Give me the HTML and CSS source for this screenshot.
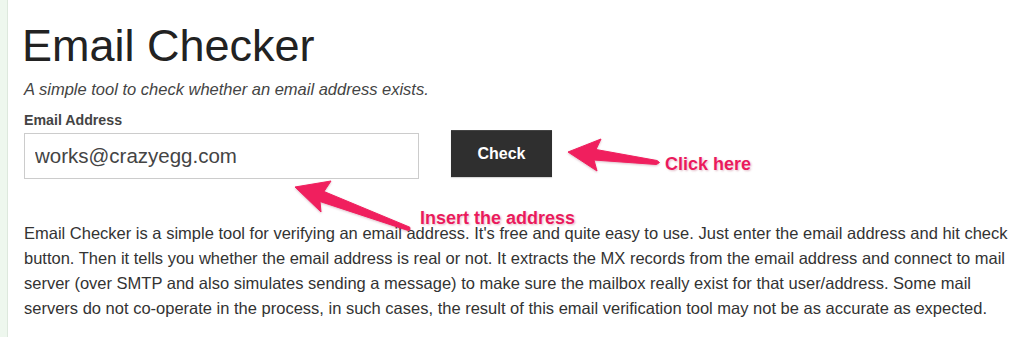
FILE: index.html
```html
<!DOCTYPE html>
<html lang="en">
<head>
<meta charset="utf-8">
<title>Email Checker</title>
<link rel="stylesheet" href="styles.css">
</head>
<body>
<div class="page">
  <div class="content">
    <h1 class="title">Email Checker</h1>
    <p class="subtitle">A simple tool to check whether an email address exists.</p>
    <form class="form" onsubmit="return false;">
      <label class="label" for="email">Email Address</label>
      <div class="row">
        <input class="input" id="email" type="text" value="works@crazyegg.com">
        <button class="button" type="submit">Check</button>
      </div>
    </form>
    <p class="desc">Email Checker is a simple tool for verifying an email address. It's free and quite easy to use. Just enter the email address and hit check button. Then it tells you whether the email address is real or not. It extracts the MX records from the email address and connect to mail server (over SMTP and also simulates sending a message) to make sure the mailbox really exist for that user/address. Some mail servers do not co-operate in the process, in such cases, the result of this email verification tool may not be as accurate as expected.</p>
  </div>
  <svg class="arrows" width="1024" height="337" viewBox="0 0 1024 337" aria-hidden="true">
    <polygon class="arrow" points="568,152 601,139 596,149.5 657,160.5 659.5,162.5 656.5,164.5 594,160 597,171"/>
    <polygon class="arrow" points="295,187 331,181 324,191.5 409.8,227.2 410,229.8 407.8,230.4 320,201.5 321,212"/>
  </svg>
  <span class="note note-check">Click here</span>
  <span class="note note-insert">Insert the address</span>
</div>
</body>
</html>
```

FILE: styles.css
```css
html, body {
  margin: 0;
  padding: 0;
  background: #ffffff;
}

body {
  font-family: "Liberation Sans", Arial, Helvetica, sans-serif;
  color: #333333;
  width: 1024px;
  height: 337px;
  overflow: hidden;
}

.page {
  position: relative;
  height: 337px;
  border-left: 7px solid #eef7ee;
}

.content {
  height: 337px;
  box-sizing: border-box;
  border-left: 1px solid #dde8dd;
  padding: 22px 6px 0 16px;
}

.title {
  margin: 0 0 0 -2px;
  font-size: 45px;
  line-height: 48px;
  font-weight: normal;
  color: #222222;
}

.subtitle {
  margin: 9px 0 0 0;
  font-size: 16.5px;
  line-height: 20px;
  font-style: italic;
  color: #444444;
}

.form {
  margin: 11px 0 0 0;
}

.label {
  display: block;
  font-size: 14.2px;
  line-height: 20px;
  font-weight: bold;
  color: #444444;
}

.row {
  display: flex;
  align-items: flex-start;
  gap: 32px;
}

.input {
  box-sizing: border-box;
  width: 395px;
  height: 46px;
  margin-top: 3px;
  padding: 0 10px;
  border: 1px solid #cccccc;
  border-radius: 0;
  font-family: "Liberation Sans", Arial, Helvetica, sans-serif;
  font-size: 20.5px;
  color: #444444;
  background: #ffffff;
  outline: none;
}

.button {
  box-sizing: border-box;
  width: 101px;
  height: 47px;
  border: 0;
  border-top: 1px solid #444444;
  border-radius: 0;
  background: #2f2f2f;
  color: #ffffff;
  font-family: "Liberation Sans", Arial, Helvetica, sans-serif;
  font-size: 16px;
  font-weight: bold;
  padding: 0;
  box-shadow: 0 1px 1px rgba(0, 0, 0, 0.15);
}

.desc {
  margin: 42px 0 0 0;
  font-size: 16.5px;
  line-height: 25px;
  color: #333333;
}

.arrows {
  position: absolute;
  top: 0;
  left: -7px;
  pointer-events: none;
}

.arrow {
  fill: #f01f5e;
  stroke: #f01f5e;
  stroke-width: 1;
  stroke-linejoin: round;
  filter: drop-shadow(0 1px 1px rgba(120, 0, 40, 0.25));
}

.note {
  position: absolute;
  font-size: 18px;
  line-height: 14px;
  font-weight: bold;
  color: #ea1a5c;
  white-space: nowrap;
  text-shadow: 0 0 2px #ffffff, 1px 1px 2px rgba(150, 0, 50, 0.3);
}

.note-check {
  left: 658px;
  top: 157px;
}

.note-insert {
  left: 413px;
  top: 211px;
}
```
